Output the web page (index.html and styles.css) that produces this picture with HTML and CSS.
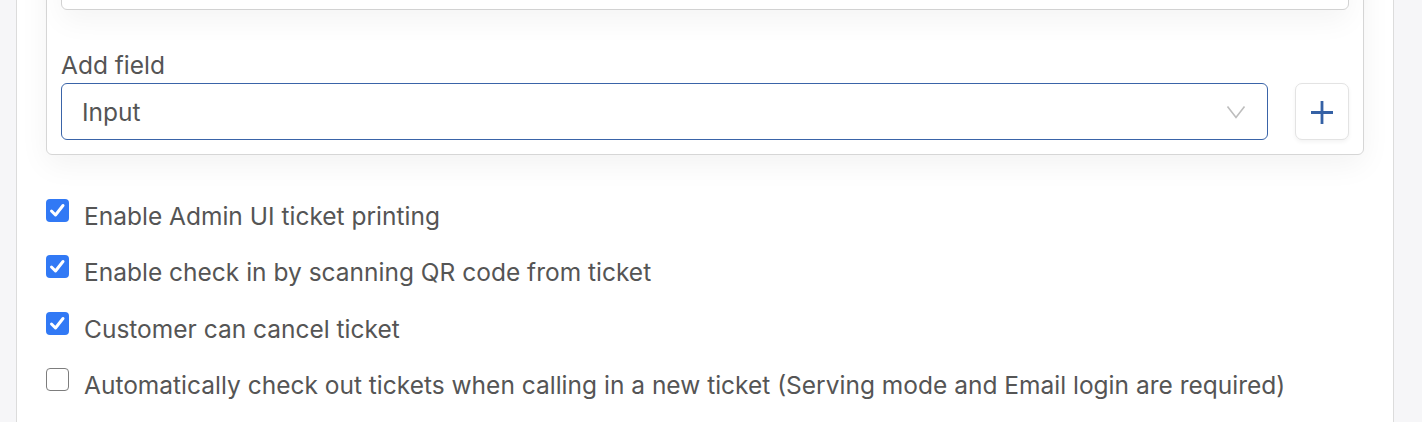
FILE: index.html
```html
<!DOCTYPE html>
<html>
<head>
<meta charset="utf-8">
<link rel="stylesheet" href="styles.css">
</head>
<body>
<div class="panel">
  <div class="card">
    <div class="text-input"></div>
    <label class="field-label">Add field</label>
    <div class="field-row">
      <div class="select">
        <span class="select-value">Input</span>
        <svg class="chevron" width="20" height="14" viewBox="0 0 20 14"><path d="M1.5 1.5 L10 12.5 L18.5 1.5" fill="none" stroke="#bdbdbd" stroke-width="1.6"/></svg>
      </div>
      <button class="add-btn" type="button">
        <svg width="24" height="24" viewBox="0 0 24 24"><path d="M12 1 V24 M1 12.5 H23" fill="none" stroke="#3561a5" stroke-width="2.8"/></svg>
      </button>
    </div>
  </div>
  <ul class="options">
    <li class="option"><span class="box checked"><svg width="23" height="23" viewBox="0 0 23 23"><path d="M5.5 12 L9.5 16 L17 6.5" fill="none" stroke="#fff" stroke-width="3" stroke-linecap="round" stroke-linejoin="round"/></svg></span><span class="opt-text">Enable Admin UI ticket printing</span></li>
    <li class="option"><span class="box checked"><svg width="23" height="23" viewBox="0 0 23 23"><path d="M5.5 12 L9.5 16 L17 6.5" fill="none" stroke="#fff" stroke-width="3" stroke-linecap="round" stroke-linejoin="round"/></svg></span><span class="opt-text">Enable check in by scanning QR code from ticket</span></li>
    <li class="option"><span class="box checked"><svg width="23" height="23" viewBox="0 0 23 23"><path d="M5.5 12 L9.5 16 L17 6.5" fill="none" stroke="#fff" stroke-width="3" stroke-linecap="round" stroke-linejoin="round"/></svg></span><span class="opt-text">Customer can cancel ticket</span></li>
    <li class="option"><span class="box"></span><span class="opt-text">Automatically check out tickets when calling in a new ticket (Serving mode and Email login are required)</span></li>
  </ul>
</div>
</body>
</html>
```

FILE: styles.css
```css
* { box-sizing: border-box; }
html, body { margin: 0; padding: 0; }
body {
  background: #f6f6f8;
  font-family: Inter, "Liberation Sans", sans-serif;
  color: #555555;
  overflow: hidden;
  height: 422px;
}
.panel {
  margin-left: 16px;
  margin-top: -63px;
  width: 1378px;
  height: 486px;
  background: #ffffff;
  border: 1px solid #dcdcdc;
  border-bottom: none;
  padding: 0 29px;
}
.card {
  border: 1px solid #d6d6d6;
  border-radius: 6px;
  padding: 14px 14px 14px 14px;
  background: #fff;
  box-shadow: 0 10px 30px rgba(0,0,0,0.05);
}
.text-input {
  height: 57px;
  border: 1px solid #d2d2d2;
  border-radius: 6px;
  background: #fff;
  box-shadow: 0 12px 28px rgba(0,0,0,0.045);
}
.field-label {
  display: block;
  margin-top: 41px;
  font-size: 24.5px;
  line-height: 29px;
  color: #555;
}
.field-row {
  margin-top: 3px;
  display: flex;
  gap: 27px;
}
.select {
  flex: 1;
  height: 57px;
  border: 1px solid #3a64a8;
  border-radius: 6px;
  display: flex;
  align-items: center;
  padding: 0 21px 0 20px;
}
.select-value {
  flex: 1;
  font-size: 24.5px;
  color: #555;
}
.chevron { margin-top: 1px; }
.add-btn {
  width: 54px;
  height: 57px;
  border: 1px solid #e3e3e3;
  border-radius: 7px;
  background: #fff;
  box-shadow: 0 2px 4px rgba(0,0,0,0.05);
  display: flex;
  align-items: center;
  justify-content: center;
  padding: 0;
}
.options {
  list-style: none;
  margin: 46.5px 0 0 0;
  padding: 0;
  display: flex;
  flex-direction: column;
  gap: 27.67px;
}
.option {
  display: flex;
  align-items: center;
  gap: 15px;
  height: 29px;
}
.box {
  width: 23px;
  height: 23px;
  border-radius: 4px;
  border: 1.5px solid #7d7d7d;
  background: #fff;
  margin-bottom: 12px;
  flex: none;
  display: block;
}
.box.checked {
  background: #3179f5;
  border: none;
}
.box svg { display: block; }
.opt-text {
  font-size: 24.5px;
  line-height: 29px;
  color: #555;
  white-space: nowrap;
}
```
